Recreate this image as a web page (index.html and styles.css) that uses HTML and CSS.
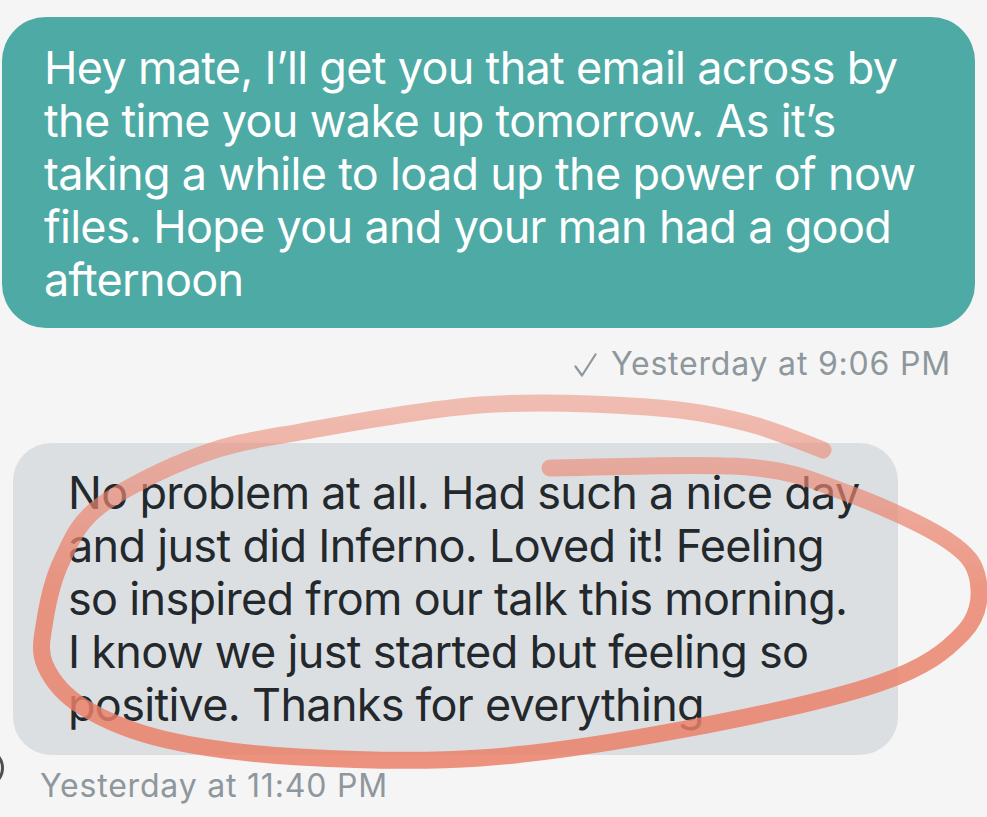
FILE: index.html
```html
<!DOCTYPE html>
<html lang="en">
<head>
<meta charset="utf-8">
<title>Chat</title>
<link rel="stylesheet" href="styles.css">
</head>
<body>
<div class="chat">
  <div class="msg msg-out">
    <div class="bubble bubble-teal">Hey mate, I’ll get you that email across by<br>the time you wake up tomorrow. As it’s<br>taking a while to load up the power of now<br>files. Hope you and your man had a good<br>afternoon</div>
    <div class="meta meta-out"><svg class="tick" width="23" height="24" viewBox="0 0 23 24"><path d="M1.5 13.5 L8 22.5 L21.5 1.5" fill="none" stroke="#8e979c" stroke-width="2.2" stroke-linecap="round" stroke-linejoin="round"/></svg><span>Yesterday at 9:06 PM</span></div>
  </div>
  <div class="msg msg-in">
    <div class="bubble bubble-grey">No problem at all. Had such a nice day<br>and just did Inferno. Loved it! Feeling<br>so inspired from our talk this morning.<br>I know we just started but feeling so<br>positive. Thanks for everything</div>
    <div class="meta meta-in">Yesterday at 11:40 PM</div>
  </div>
  <div class="avatar"></div>
  <svg class="annot" width="987" height="817" viewBox="0 0 987 817">
    <defs>
      <linearGradient id="ink" gradientUnits="userSpaceOnUse" x1="0" y1="400" x2="0" y2="770">
        <stop offset="0" stop-color="#ec8f7c" stop-opacity="0.55"/>
        <stop offset="0.5" stop-color="#ea8068" stop-opacity="0.8"/>
        <stop offset="1" stop-color="#ea8068" stop-opacity="0.85"/>
      </linearGradient>
    </defs>
    <path d="M550 468 C583 468 697.5 462.8 747 467 C796.5 471.2 813.7 480.8 847 493 C880.3 505.2 925.2 525.5 947 540 C968.8 554.5 975.3 564.5 978 580 C980.7 595.5 979.3 615.8 963 633 C946.7 650.2 927.2 666.8 880 683 C832.8 699.2 746.7 717.5 680 730 C613.3 742.5 543.3 753.5 480 758 C416.7 762.5 352.2 760 300 757 C247.8 754 203.2 748.3 167 740 C130.8 731.7 103.3 719.5 83 707 C62.7 694.5 51.3 679.5 45 665 C38.7 650.5 42.2 637.5 45 620 C47.8 602.5 52.8 579 62 560 C71.2 541 77 523.5 100 506 C123 488.5 166.7 467.3 200 455 C233.3 442.7 253.3 440.3 300 432 C346.7 423.7 422.2 409.2 480 405 C537.8 400.8 602.5 404 647 407 C691.5 410 717.7 415.8 747 423 C776.3 430.2 810.3 445.5 823 450" fill="none" stroke="url(#ink)" stroke-width="17" stroke-linecap="round" stroke-linejoin="round"/>
  </svg>
</div>
</body>
</html>
```

FILE: styles.css
```css
html, body {
  margin: 0;
  padding: 0;
  background: #f5f5f5;
}
body {
  font-family: Inter, "Noto Sans", "Liberation Sans", sans-serif;
  width: 987px;
  height: 817px;
  overflow: hidden;
}
.chat {
  position: relative;
  width: 987px;
  height: 817px;
  padding-top: 17px;
  box-sizing: border-box;
  display: flex;
  flex-direction: column;
}
.msg {
  display: flex;
  flex-direction: column;
}
.bubble {
  font-size: 45px;
  line-height: 53px;
  letter-spacing: -0.7px;
  box-sizing: border-box;
}
.bubble-teal {
  margin-left: 2px;
  width: 973px;
  background: #4eaaa5;
  color: #ffffff;
  border-radius: 44px;
  padding: 24px 20px 22px 42px;
}
.bubble-grey {
  margin-left: 13px;
  width: 885px;
  background: #dcdfe2;
  color: #23282c;
  border-radius: 38px;
  padding: 23px 20px 24px 55px;
}
.meta {
  font-size: 32px;
  line-height: 36px;
  letter-spacing: 0.8px;
  color: #8e979c;
}
.meta-out {
  align-self: flex-end;
  margin-right: 36px;
  margin-top: 18px;
  display: flex;
  align-items: center;
  gap: 14px;
}
.tick {
  display: block;
  margin-top: 1px;
}
.msg-in {
  margin-top: 61px;
}
.meta-in {
  margin-left: 40px;
  margin-top: 13px;
}
.avatar {
  position: absolute;
  left: -36px;
  top: 748px;
  width: 34px;
  height: 34px;
  border-radius: 50%;
  border: 3px solid #4a4f52;
}
.annot {
  position: absolute;
  left: 0;
  top: 0;
  pointer-events: none;
}
```
